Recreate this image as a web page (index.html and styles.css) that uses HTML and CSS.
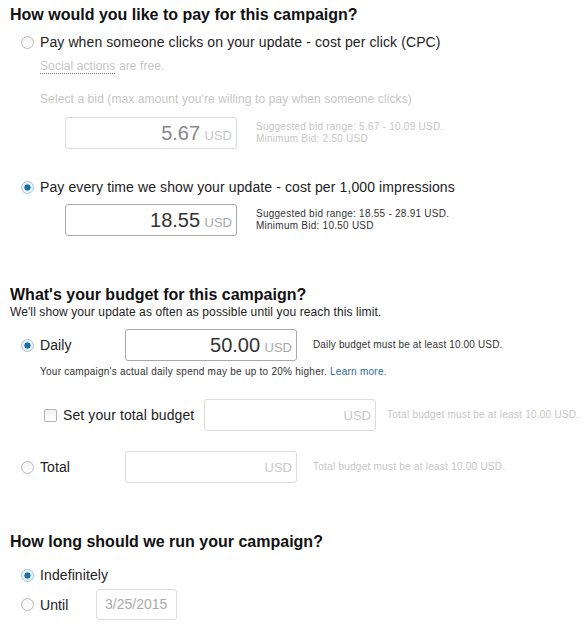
FILE: index.html
```html
<!DOCTYPE html>
<html lang="en">
<head>
  <meta charset="UTF-8">
  <title>Campaign budget</title>
  <link rel="stylesheet" href="styles.css">
</head>
<body>
  <div class="form">

    <!-- pricing -->
    <h2 class="title title-first">How would you like to pay for this campaign?</h2>

    <div class="option option-cpc">
      <span class="radio"></span>
      <span class="label">Pay when someone clicks on your update - cost per click (CPC)</span>
    </div>
    <div class="note note-muted note-social"><span class="dotted">Social actions</span> are free.</div>
    <div class="note note-muted note-bid">Select a bid (max amount you're willing to pay when someone clicks)</div>
    <div class="bid-row bid-cpc">
      <div class="money disabled"><span class="amount">5.67</span> <span class="currency">USD</span></div>
      <div class="hint muted">Suggested bid range: 5.67 - 10.09 USD.<br>Minimum Bid: 2.50 USD</div>
    </div>

    <div class="option option-cpm">
      <span class="radio checked"></span>
      <span class="label">Pay every time we show your update - cost per 1,000 impressions</span>
    </div>
    <div class="bid-row bid-cpm">
      <div class="money"><span class="amount">18.55</span> <span class="currency">USD</span></div>
      <div class="hint">Suggested bid range: 18.55 - 28.91 USD.<br>Minimum Bid: 10.50 USD</div>
    </div>

    <!-- budget -->
    <h2 class="title title-budget">What's your budget for this campaign?</h2>
    <div class="subtitle">We'll show your update as often as possible until you reach this limit.</div>

    <div class="budget-row row-daily">
      <span class="radio checked"></span>
      <span class="label budget-label">Daily</span>
      <div class="money"><span class="amount">50.00</span> <span class="currency">USD</span></div>
      <div class="hint">Daily budget must be at least 10.00 USD.</div>
    </div>
    <div class="small-note">Your campaign's actual daily spend may be up to 20% higher. <a href="#" class="link">Learn more.</a></div>

    <div class="budget-row row-cap">
      <span class="checkbox"></span>
      <span class="label cap-label">Set your total budget</span>
      <div class="money disabled"><span class="currency">USD</span></div>
      <div class="hint muted">Total budget must be at least 10.00 USD.</div>
    </div>

    <div class="budget-row row-total">
      <span class="radio"></span>
      <span class="label budget-label">Total</span>
      <div class="money disabled"><span class="currency">USD</span></div>
      <div class="hint muted">Total budget must be at least 10.00 USD.</div>
    </div>

    <!-- schedule -->
    <h2 class="title title-schedule">How long should we run your campaign?</h2>

    <div class="option option-forever">
      <span class="radio checked"></span>
      <span class="label">Indefinitely</span>
    </div>
    <div class="option option-until">
      <span class="radio"></span>
      <span class="label until-label">Until</span>
      <div class="date">3/25/2015</div>
    </div>

  </div>
</body>
</html>
```

FILE: styles.css
```css
* {
  box-sizing: border-box;
}

body {
  margin: 0;
  background: #fff;
  color: #222;
  font-family: "Liberation Sans", Arial, sans-serif;
}

.form {
  padding: 0 10px;
}

.title {
  margin: 0;
  font-size: 16px;
  line-height: 20px;
  font-weight: bold;
  color: #111;
}

.title-first {
  padding-top: 5px;
}

.title-budget {
  margin-top: 49px;
}

.title-schedule {
  margin-top: 49px;
}

/* radio rows */
.option {
  display: flex;
  align-items: center;
  height: 20px;
  padding-left: 11px;
}

.option-cpc {
  margin-top: 7px;
}

.option-cpm {
  margin-top: 28px;
}

.option-forever {
  margin-top: 13px;
}

.option-until {
  height: 31px;
  margin-top: 4px;
}

.label {
  flex: none;
  font-size: 14px;
  line-height: 20px;
  letter-spacing: 0.1px;
  margin-left: 6px;
  white-space: nowrap;
}

.radio {
  flex: none;
  width: 13px;
  height: 13px;
  border-radius: 50%;
  border: 1px solid #b9b9b9;
  background: linear-gradient(#f4f4f4, #fff);
}

.radio.checked {
  border-color: #a8c4d6;
  background: radial-gradient(circle, #1a6fa5 0, #1a6fa5 2.8px, #e4f0f7 3.4px, #f6fafc 100%);
}

.checkbox {
  flex: none;
  width: 13px;
  height: 13px;
  border: 1px solid #b4b4b4;
  border-radius: 2px;
  background: linear-gradient(#f2f2f2, #fff);
}

/* grey notes under the cpc option */
.note {
  font-size: 12px;
  line-height: 16px;
  letter-spacing: 0.1px;
  padding-left: 30px;
}

.note-muted {
  color: #c6c6c6;
}

.note-social {
  margin-top: 6px;
}

.note-bid {
  margin-top: 17px;
}

.dotted {
  border-bottom: 1px dotted #777;
}

/* amount boxes */
.bid-row {
  display: flex;
  align-items: center;
  padding-left: 55px;
}

.bid-cpc {
  margin-top: 10px;
}

.bid-cpm {
  margin-top: 7px;
}

.money {
  flex: none;
  width: 172px;
  height: 32px;
  padding-right: 4px;
  border: 1px solid #a9a9a9;
  border-radius: 3px;
  background: #fff;
  text-align: right;
  line-height: 30px;
  white-space: nowrap;
}

.money.disabled {
  border-color: #dcdcdc;
}

.amount {
  font-size: 20px;
  color: #333;
}

.money.disabled .amount {
  color: #888;
}

.currency {
  font-size: 13px;
  color: #aaa;
}

.money.disabled .currency {
  color: #c8c8c8;
}

.hint {
  flex: none;
  margin-left: 19px;
  font-size: 10px;
  line-height: 12px;
  letter-spacing: 0.25px;
  color: #333;
  white-space: nowrap;
}

.hint.muted {
  color: #c6c6c6;
}

/* budget */
.subtitle {
  font-size: 12px;
  line-height: 14px;
  letter-spacing: 0.1px;
}

.budget-row {
  display: flex;
  align-items: center;
  height: 32px;
  padding-left: 11px;
}

.budget-label {
  width: 85px;
}

.budget-row .hint {
  margin-left: 16px;
  letter-spacing: 0.15px;
}

.row-daily {
  margin-top: 10px;
}

.row-cap {
  margin-top: 21px;
  padding-left: 34px;
}

.cap-label {
  width: 141px;
}

.row-cap .hint {
  margin-left: 11px;
  letter-spacing: 0.25px;
}

.row-total {
  margin-top: 20px;
}

.row-total .hint {
  letter-spacing: 0.25px;
}

.small-note {
  margin-top: 5px;
  padding-left: 30px;
  font-size: 10px;
  line-height: 12px;
  letter-spacing: 0.25px;
  color: #333;
}

.link {
  color: #2a6c9b;
  text-decoration: none;
}

/* schedule */
.until-label {
  width: 56px;
}

.date {
  width: 81px;
  height: 31px;
  padding-left: 8px;
  border: 1px solid #dcdcdc;
  border-radius: 3px;
  font-size: 14px;
  line-height: 29px;
  color: #aaa;
}
```
